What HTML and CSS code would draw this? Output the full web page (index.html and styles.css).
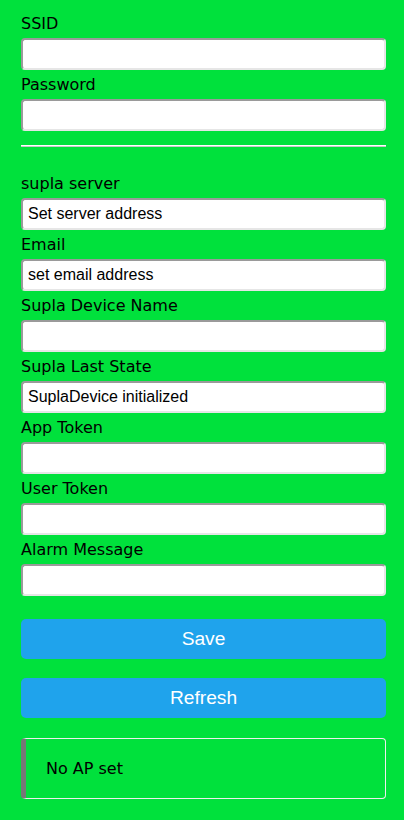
FILE: index.html
```html
<!DOCTYPE html>
<html>
<head>
<meta charset="utf-8">
<link rel="stylesheet" href="styles.css">
</head>
<body>
<form class="form">
  <label class="lbl">SSID</label>
  <input class="inp" type="text">
  <label class="lbl">Password</label>
  <input class="inp" type="text">
  <hr class="sep">
  <label class="lbl">supla server</label>
  <input class="inp" type="text" value="Set server address">
  <label class="lbl">Email</label>
  <input class="inp" type="text" value="set email address">
  <label class="lbl">Supla Device Name</label>
  <input class="inp" type="text">
  <label class="lbl">Supla Last State</label>
  <input class="inp" type="text" value="SuplaDevice initialized">
  <label class="lbl">App Token</label>
  <input class="inp" type="text">
  <label class="lbl">User Token</label>
  <input class="inp" type="text">
  <label class="lbl">Alarm Message</label>
  <input class="inp" type="text">
  <button class="btn btn-save" type="button">Save</button>
  <button class="btn btn-refresh" type="button">Refresh</button>
  <div class="msg">No AP set</div>
</form>
</body>
</html>
```
FILE: styles.css
```css
html, body {
  margin: 0;
  padding: 0;
}
body {
  background: #00e13c;
  font-family: "DejaVu Sans", Verdana, sans-serif;
  font-size: 16px;
  color: #000;
}
.form {
  width: 365px;
  margin: 0 0 0 21px;
  padding-top: 14px;
  display: flex;
  flex-direction: column;
}
.lbl {
  display: block;
  line-height: 19px;
  height: 19px;
  margin-bottom: 5px;
}
.inp {
  box-sizing: border-box;
  width: 365px;
  height: 32px;
  margin: 0 0 5px 0;
  padding: 5px;
  font-family: "Liberation Sans", Arial, sans-serif;
  font-size: 16px;
  color: #000;
  background: #fff;
  border: 2px solid;
  border-color: #9a9a9a #e6e6e6 #e6e6e6 #9a9a9a;
  border-radius: 4px;
  outline: none;
}
.sep {
  width: 365px;
  margin: 9px 0 27px 0;
  height: 0;
  border: 0;
  border-top: 1px solid #fff;
  border-bottom: 1px solid #c8c8c8;
}
.btn {
  box-sizing: border-box;
  width: 365px;
  height: 40px;
  border: 0;
  border-radius: 5px;
  background: #1fa3ec;
  color: #fff;
  font-family: "Liberation Sans", Arial, sans-serif;
  font-size: 19.2px;
  padding: 0;
}
.btn-save {
  margin-top: 18px;
}
.btn-refresh {
  margin-top: 19px;
}
.msg {
  margin-top: 20px;
  box-sizing: border-box;
  height: 61px;
  padding: 20px 20px 20px 20px;
  line-height: 19px;
  border: 1px solid #eee;
  border-left: 5px solid #777;
  border-radius: 4px;
}
```
